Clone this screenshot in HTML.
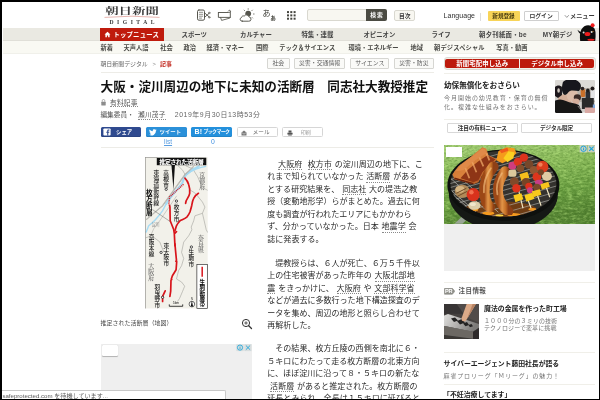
<!DOCTYPE html>
<html lang="ja">
<head>
<meta charset="utf-8">
<title>大阪・淀川周辺の地下に未知の活断層　同志社大教授推定：朝日新聞デジタル</title>
<style>
html,body{margin:0;padding:0;}
body{width:600px;height:400px;position:relative;overflow:hidden;background:#fff;will-change:transform;
 font-family:"Liberation Sans","Noto Sans CJK JP",sans-serif;color:#333;}
.a{position:absolute;white-space:nowrap;margin:0;padding:0;box-sizing:border-box;}
.b{font-weight:bold;}
.c{text-align:center;}
/* nav */
.n1{top:28px;height:13px;line-height:13.5px;font-size:6.4px;font-weight:bold;color:#444;}
.n2{top:41px;height:12.4px;line-height:13.4px;font-size:6.25px;font-weight:bold;color:#4a4a46;}
.tag{top:58.4px;height:10.4px;line-height:9.6px;font-size:5.9px;color:#585858;border:0.5px solid #d6d6d2;border-radius:1px;text-align:center;background:#fafaf8;}
.hl{left:0;height:0.9px;background:#edece7;}
.hr2{height:1px;background:#f0efe9;}
.body{left:267.3px;font-size:8.04px;line-height:12.5px;color:#2b2b2b;}
.kw{margin:0 2.8px;border-bottom:0.6px dotted #8a8a8a;padding-bottom:0.3px;}
.sb{top:127.1px;height:10.3px;box-shadow:inset 0 -0.6px 0 rgba(0,0,0,.18);border-radius:1.5px;color:#fff;font-size:5.4px;font-weight:bold;line-height:10px;}
.wb{top:127.1px;height:10.3px;border-radius:1.5px;border:0.5px solid #d6d6d6;background:#fff;font-size:5.6px;line-height:9.4px;color:#666;}
.rt{font-size:7.5px;font-weight:bold;color:#222;line-height:10px;}
.rd{font-size:6px;color:#747474;line-height:8px;letter-spacing:0.97px;}
</style>
</head>
<body>

<!-- ===== header ===== -->
<div class="a" id="logo" style="left:104px;top:3px;width:56px;height:22px;">
 <div class="a" style="left:8px;top:0.6px;width:40px;text-align:center;font-family:'Liberation Serif','Noto Serif CJK SC',serif;font-weight:bold;font-size:9.6px;line-height:14px;color:#3c3c3c;transform:scaleX(1.4);transform-origin:50% 50%;">朝日新聞</div>
 <svg class="a" style="left:0;top:11.4px;" width="56" height="5" viewBox="0 0 56 5"><path d="M0.5 3.4 Q28 1 55.5 3.4" fill="none" stroke="#dc938c" stroke-width="0.7"/></svg>
 <div class="a" style="left:0;top:14.9px;width:56px;text-align:center;font-family:'Liberation Serif',serif;font-weight:bold;font-size:5.6px;line-height:8px;letter-spacing:3.5px;color:#3a3a3a;padding-left:3.5px;">DIGITAL</div>
</div>

<!-- header icons -->
<svg class="a" style="left:195px;top:6px;" width="104" height="18" viewBox="195 6 104 18" fill="none" stroke="#55554d" stroke-width="1" stroke-linecap="round" stroke-linejoin="round">
 <!-- scrap -->
 <rect x="197.500" y="10" width="7" height="10.200" rx="1.400"/>
 <path d="M199.300 12.300h3.400M199.300 14.300h3.400M199.300 16.200h3.400M199.300 18.100h2.200" stroke-width="0.650"/>
 <path d="M205.200 13.400l3.600 3.200M205.200 16.800l3.600-3.200" stroke-width="0.900"/>
 <circle cx="209.200" cy="12.900" r="0.800" stroke-width="0.650"/><circle cx="209.200" cy="17.300" r="0.800" stroke-width="0.650"/>
 <!-- speech -->
 <path d="M218.400 12.500h9.800c1.600 0 2.400-.400 2.300-1.300-.1-1.100-1.700-1.300-2.200-.2M230.300 11.800v5.600h-11.900v-4.900" stroke-width="0.950"/>
 <path d="M220.600 17.600l1 2.800 8.200-2.300.5-.7" stroke-width="0.850"/>
 <!-- weather -->
 <circle cx="248.200" cy="13.600" r="2.900" fill="#55554d" stroke="none"/>
 <path d="M248.200 8.700v.6M244.100 10.100l.5.500M252.400 10.100l-.5.500M253.500 14h.6M252.200 17.600l.4.400" stroke-width="0.800"/>
 <path d="M242.300 21.200h6.400a2.100 2.100 0 0 0 .4-4.200 2.700 2.700 0 0 0-4.900-.9 1.900 1.900 0 0 0-2.700 1.400 1.900 1.900 0 0 0 .8 3.700z" fill="#fff" stroke-width="0.950"/>
 <!-- grid -->
 <g fill="#44443e" stroke="none">
 <rect x="287.0" y="11.1" width="2" height="2"/><rect x="290.3" y="11.1" width="2" height="2"/><rect x="293.6" y="11.1" width="2" height="2"/>
 <rect x="287.0" y="14.4" width="2" height="2"/><rect x="290.3" y="14.4" width="2" height="2"/><rect x="293.6" y="14.4" width="2" height="2"/>
 <rect x="287.0" y="17.7" width="2" height="2"/><rect x="290.3" y="17.7" width="2" height="2"/><rect x="293.6" y="17.7" width="2" height="2"/>
 </g>
</svg>
<div class="a" style="left:262.6px;top:9.0px;font-size:8px;line-height:10px;color:#3c3c36;">あ</div>
<div class="a b" style="left:269.8px;top:13.2px;font-size:6.6px;line-height:10px;color:#4a4a43;">ぁ</div>

<!-- search -->
<div class="a" style="left:306.5px;top:9.2px;width:60px;height:12px;background:#f8f7f1;border:0.5px solid #d9d8d0;border-radius:2px 0 0 2px;"></div>
<div class="a b c" style="left:366px;top:9.2px;width:21px;height:12px;background:#4b4b43;border-radius:0 2px 2px 0;color:#fff;font-size:5.8px;line-height:12px;letter-spacing:0.8px;padding-left:0.8px;">検索</div>
<div class="a b c" style="left:394.3px;top:9.8px;width:21px;height:10.8px;background:#f8f7f1;border:0.5px solid #d9d8d0;border-radius:2px;color:#3a3a3a;font-size:5.8px;line-height:10px;">目次</div>

<div class="a" style="left:443.5px;top:11.4px;font-size:7px;line-height:10px;color:#2e2e2e;letter-spacing:0.05px;">Language</div>
<div class="a" style="left:480.4px;top:12.5px;width:0.6px;height:8px;background:#ddd;"></div>
<div class="a b c" style="left:487.5px;top:11.2px;width:32px;height:10.2px;background:#f8d458;border-radius:1px;color:#4a3d10;font-size:5.6px;line-height:10.2px;">新規登録</div>
<div class="a b c" style="left:523.5px;top:11.2px;width:35.2px;height:10.2px;background:#fff;border:0.5px solid #cfcfcf;border-radius:1px;color:#3a3a3a;font-size:5.8px;line-height:9.4px;">ログイン</div>
<svg class="a" style="left:564px;top:14px;" width="6" height="5" viewBox="0 0 6 5"><path d="M0.8 1.2l2 2.2 2-2.2" fill="none" stroke="#555" stroke-width="0.6"/></svg>
<div class="a b" style="left:570px;top:11.2px;font-size:6.2px;line-height:10.2px;color:#3a3a3a;">メニュー</div>

<!-- nav bars -->
<div class="a" style="left:3px;top:28px;width:596px;height:12.9px;background:#eae9e2;border-bottom:0.6px solid #e0dfd8;"></div>
<div class="a" style="left:3px;top:40.9px;width:596px;height:13.2px;background:#f9f9f3;border-bottom:1px solid #f0f0ea;"></div>
<div class="a" style="left:100px;top:28px;width:63.6px;height:12.9px;background:#bf1b0d;"></div>
<svg class="a" style="left:104.2px;top:31.4px;" width="7" height="7" viewBox="0 0 8 8"><path d="M4 0.8L0.6 4h1v3h1.700V5h1.400v2h1.700V4h1z" fill="#fff"/></svg>
<div class="a n1" style="left:113.5px;color:#fff;letter-spacing:0.15px;">トップニュース</div>
<div class="a n1" style="left:181.5px;">スポーツ</div>
<div class="a n1" style="left:240px;">カルチャー</div>
<div class="a n1" style="left:301.4px;">特集・連載</div>
<div class="a n1" style="left:363.4px;">オピニオン</div>
<div class="a n1" style="left:431.6px;">ライフ</div>
<div class="a n1" style="left:479px;letter-spacing:0.25px;">朝夕刊紙面・be</div>
<div class="a n1" style="left:542.8px;letter-spacing:0.2px;">MY朝デジ</div>

<div class="a n2" style="left:100.4px;">新着</div>
<div class="a n2" style="left:123.6px;">天声人語</div>
<div class="a n2" style="left:160.2px;">社会</div>
<div class="a n2" style="left:183.4px;">政治</div>
<div class="a n2" style="left:206.4px;">経済・マネー</div>
<div class="a n2" style="left:256px;">国際</div>
<div class="a n2" style="left:279.2px;">テック＆サイエンス</div>
<div class="a n2" style="left:348.6px;">環境・エネルギー</div>
<div class="a n2" style="left:410.6px;">地域</div>
<div class="a n2" style="left:434px;letter-spacing:0.15px;">朝デジスペシャル</div>
<div class="a n2" style="left:496.2px;">写真・動画</div>

<!-- mascot -->
<svg class="a" style="left:576px;top:21px;" width="22" height="21" viewBox="576 21 22 21">
 <path d="M580.200 41c-.6-4.500-.4-8.500 1.200-11.500 1.500-2.700 4-4.200 6.800-4.200 4.200 0 7 3 7.300 7.200 .2 3.200 0 6-.3 8.500z" fill="#0e0e0e"/>
 <path d="M577.400 29.800l1.600 3 2.200 1.800.6-2.200-2-1z" fill="#0e0e0e"/>
 <circle cx="592.600" cy="25.200" r="2" fill="#ee1c1c"/>
 <ellipse cx="587.500" cy="34" rx="2.900" ry="2" fill="#ee1c1c"/>
 <circle cx="583.600" cy="32.400" r="1" fill="#ddd"/><circle cx="591.600" cy="32" r="1" fill="#ddd"/>
 <circle cx="593" cy="31.400" r="0.500" fill="#f0a020"/>
 <ellipse cx="591" cy="39.700" rx="3.600" ry="1" fill="#ee1c1c"/>
</svg>

<!-- breadcrumb + tags -->
<div class="a" style="left:100.4px;top:59.5px;font-size:5.95px;line-height:9px;color:#666;">朝日新聞デジタル</div>
<div class="a" style="left:152.6px;top:59.5px;font-size:5.8px;line-height:9px;color:#888;">&gt;</div>
<div class="a b" style="left:160px;top:59.5px;font-size:5.95px;line-height:9px;color:#c0241a;">記事</div>

<div class="a tag" style="left:266.6px;width:23.4px;">社会</div>
<div class="a tag" style="left:294px;width:51.2px;">災害・交通情報</div>
<div class="a tag" style="left:350.4px;width:38.8px;">サイエンス</div>
<div class="a tag" style="left:394px;width:39.8px;">災害・防災</div>

<div class="a hl" style="left:100.5px;top:72px;width:333px;"></div>

<!-- headline -->
<h1 class="a b" style="left:100.6px;top:78.1px;font-size:12.6px;line-height:18px;color:#111;letter-spacing:0;">大阪・淀川周辺の地下に未知の活断層　同志社大教授推定</h1>

<!-- paid -->
<svg class="a" style="left:101px;top:99px;" width="5" height="7" viewBox="0 0 5 7"><rect x="0.3" y="2.800" width="4.400" height="3.600" rx="0.500" fill="#8c8c8c"/><path d="M1.200 2.800v-1a1.300 1.300 0 0 1 2.600 0v1" fill="none" stroke="#8c8c8c" stroke-width="0.700"/></svg>
<div class="a" style="left:110px;top:98.5px;font-size:6.7px;line-height:7.9px;color:#555;letter-spacing:0.25px;border-bottom:0.6px dotted #888;">有料記事</div>

<!-- byline -->
<div class="a" style="left:100.4px;top:110px;font-size:6.7px;line-height:10px;color:#555;">編集委員・</div>
<div class="a" style="left:138px;top:110.9px;font-size:6.7px;line-height:8px;color:#555;letter-spacing:0.2px;border-bottom:0.6px dotted #888;">瀬川茂子</div>
<div class="a" style="left:174.8px;top:110px;font-size:6.9px;line-height:10px;color:#666;letter-spacing:0.56px;">2019年9月30日13時53分</div>

<!-- share -->
<div class="a sb" style="left:100.5px;width:40.7px;background:#2f4a8f;"><svg class="a" style="left:2px;top:1.2px;" width="8" height="8" viewBox="0 0 8 8"><rect x="0.4" y="0.4" width="7.200" height="7.200" rx="0.800" fill="#fff"/><path d="M5.300 7.600V4.800h.9l.15-1.100H5.300v-.7c0-.3.100-.5.500-.5h.6v-1a7 7 0 0 0-.8 0c-.9 0-1.400.5-1.400 1.400v.8h-.9v1.100h.9v2.800z" fill="#2f4a8f"/></svg><span class="a" style="left:15.500px;top:0;">シェア</span></div>
<div class="a sb" style="left:146px;width:40.7px;background:#2b90d9;"><svg class="a" style="left:3px;top:1.600px;" width="8" height="7" viewBox="0 0 8 7"><path d="M7.700 1a3 3 0 0 1-.9.250 1.600 1.600 0 0 0 .7-.9 3 3 0 0 1-1 .4 1.560 1.560 0 0 0-2.700 1.400A4.400 4.400 0 0 1 .6.550a1.560 1.560 0 0 0 .5 2.100 1.500 1.500 0 0 1-.7-.2 1.560 1.560 0 0 0 1.250 1.550 1.500 1.500 0 0 1-.7 0 1.560 1.560 0 0 0 1.450 1.100A3.100 3.100 0 0 1 .1 5.750a4.400 4.400 0 0 0 6.800-3.900A3 3 0 0 0 7.700 1z" fill="#fff"/></svg><span class="a" style="left:13.500px;top:0;">ツイート</span></div>
<div class="a sb" style="left:191.4px;width:40.9px;background:#2390dc;"><span class="a" style="left:3px;top:0;font-size:7px;letter-spacing:0.3px;">B!</span><span class="a" style="left:12px;top:0;font-size:4.9px;letter-spacing:-0.55px;">ブックマーク</span></div>
<div class="a wb" style="left:236.7px;width:41px;"><svg class="a" style="left:3px;top:1.800px;" width="6" height="6" viewBox="0 0 6 6"><path d="M.5 2.600L3 .6l2.500 2V5.400H.5z" fill="#777"/><path d="M1.100 2.800L3 4.200l1.900-1.400" fill="none" stroke="#fff" stroke-width="0.500"/></svg><span class="a" style="left:15px;top:0;">メール</span></div>
<div class="a wb" style="left:282.2px;width:41px;color:#999;"><svg class="a" style="left:3.400px;top:1.700px;" width="6" height="6" viewBox="0 0 6 6"><path d="M1.500.4h3v2h-3zM.4 2.800h5.200v1.600H.4zM1.200 4.800h3.600v.8H1.200z" fill="#555"/></svg><span class="a" style="left:17.600px;top:0;font-size:5px;">印刷</span></div>
<div class="a" style="left:164px;top:138.2px;font-size:6.6px;line-height:8px;color:#5a9de0;text-decoration:underline;text-decoration-thickness:0.4px;text-underline-offset:0.6px;">list</div>
<div class="a" style="left:211px;top:138px;font-size:6.8px;line-height:8px;color:#3f8fe0;">0</div>

<div class="a hl" style="left:100.5px;top:147px;width:333px;"></div>

<!-- MAP -->
<!--MAP-->
<svg class="a" style="left:145.3px;top:157.2px;" width="62.700" height="151.500" viewBox="145.3 157.2 62.7 151.5" font-family="Liberation Sans, Noto Sans CJK JP, sans-serif">
 <rect x="145.3" y="157.2" width="62.7" height="151.5" fill="#f2f1ea"/>
 <!-- boundaries -->
 <g fill="none" stroke="#9a9a95" stroke-width="0.550">
  <path d="M178 165.500l5 5 2.500 4.500"/>
  <path d="M186 166l7 3 5 8 3 7 4 5 3 1.500"/>
  <path d="M190 190l5 3 2.750 3 5 6.250 2.500 5-2.500 6.250-7.500 2.500-1.250 5-2.500 6.250 .7 2.750-3.200 6-5 6.300-2.100 10.200 2.100 6.200-2.100 7.200-3.100 5.100-2 8.200 5.100 3.050 3.100 4.150-2.100 5.100-3 7.100-2.100 3.100"/>
  <path d="M202.750 213.500l3.750 16.250 1.500 3"/>
  <path d="M146 238l6-2 8 6 4 10"/>
 </g>
 <!-- keihan thin -->
 <path d="M177 196l-17 25-6 8-2.500 5.750" fill="none" stroke="#8f8f8a" stroke-width="0.400"/>
 <!-- river -->
 <path d="M206.500 166.600c-7 1-14 4-20.500 8.150" fill="none" stroke="#a6dbf4" stroke-width="1.300"/>
 <path d="M199 166.600c-5 2-9 5-12.500 8.150-2.500 3-2.800 5.500-3.750 8.150-2 3.500-5 6.500-7.500 9.350-3.500 4-6 7.500-8.750 11.750" fill="none" stroke="#a6dbf4" stroke-width="2.200" stroke-linecap="round" stroke-linejoin="round"/>
 <path d="M166.500 204l-3.750 7c-2 3-4.500 6-6.850 8.750-2.200 2.400-4.400 4.400-6.900 6.250l-2.500 6.250" fill="none" stroke="#a6dbf4" stroke-width="1.400" stroke-linecap="round" stroke-linejoin="round"/>
 <!-- rail -->
 <path d="M194 166.600l-8.750 8.150L162.750 206 146.500 219.750" fill="none" stroke="#9d9d98" stroke-width="1.100" stroke-linejoin="round"/>
 <path d="M194 166.600l-8.750 8.150L162.750 206 146.500 219.750" fill="none" stroke="#f2f1ea" stroke-width="0.350" stroke-linejoin="round"/>
 <!-- red faults -->
 <g fill="none" stroke="#d8141b" stroke-width="1.700" stroke-linecap="round" stroke-linejoin="round">
  <path d="M183.750 184.500L169.800 197.250 169.200 204.500" stroke-dasharray="0.95 0.85" stroke-width="1.45" stroke-linecap="butt"/>
  <path d="M169.800 205.500l.45 1.750.25 13.750 3.500 8.750.6 3.750.65 12.500"/>
  <path d="M185.250 178.250c2 2 3 4 3.750 6.500 1 3 1.200 6 1 8.750-.5 3-2.500 5-3.500 7.500l-.6 2.500"/>
  <path d="M198.750 193.500c-2.500 1.500-3.800 3-4.750 5-1.200 2.200-1.500 4.500-1.900 6.900-.5 2.300-1.200 4.600-1.850 6.850-.8 2-1.800 3.600-3.150 5-2 1.800-4.500 2.500-6.850 3.750-1.600 1.500-2.600 3.200-3.500 5l-1.500 5"/>
  <path d="M176.800 231.800l-1.500 1.500"/>
  <path d="M175.250 244l.55 6.500 1 10.200-.6.800.8.300-.6 8.200-3.700 6-1 3 .3.800-.7.600-.3 11-.8 5.200"/>
  <path d="M165.500 291l-2.600 5.600v5.100"/>
 </g>
 <!-- title -->
 <rect x="157.100" y="157.900" width="49.500" height="7.500" fill="#111"/>
 <path d="M171.750 165.300h3.500l-1.500 24.500z" fill="#111"/>
 <text x="181.850" y="163.800" font-size="5.700" font-weight="bold" fill="#fff" stroke="#fff" stroke-width="0.120" text-anchor="middle" letter-spacing="-0.200">推定された活断層</text>
 <!-- leader -->
 <path d="M152.750 209.750l17.500 11.850" stroke="#444" stroke-width="0.400" fill="none"/>
 <!-- markers -->
 <g fill="#fff" stroke="#111" stroke-width="0.750"><circle cx="166.500" cy="189.500" r="1.150"/><circle cx="176.750" cy="201.250" r="1.150"/><circle cx="161.400" cy="252.600" r="1.150"/><circle cx="191.700" cy="247.200" r="1.150"/><circle cx="162.900" cy="297.500" r="1.150"/></g>
 <text font-size="5.600" fill="#111" stroke="#111" stroke-width="0.070" text-anchor="middle"><tspan x="166.25" y="174.9">高</tspan><tspan x="166.25" y="181.0">槻</tspan><tspan x="166.25" y="187.0">市</tspan></text>
 <text font-size="5.600" fill="#111" stroke="#111" stroke-width="0.070" text-anchor="middle"><tspan x="156.6" y="174.9">東</tspan><tspan x="156.6" y="181.1">海</tspan><tspan x="156.6" y="187.2">道</tspan><tspan x="156.6" y="193.3">新</tspan><tspan x="156.6" y="199.4">幹</tspan><tspan x="156.6" y="205.5">線</tspan></text>
 <text font-size="6.600" font-weight="bold" fill="#0c0c0c" text-anchor="middle"><tspan x="149.7" y="194.7">枚</tspan><tspan x="149.7" y="201.5">方</tspan><tspan x="149.7" y="208.4">断</tspan><tspan x="149.7" y="215.2">層</tspan></text>
 <text font-size="5.600" fill="#111" stroke="#111" stroke-width="0.070" text-anchor="middle"><tspan x="176.75" y="209.3">枚</tspan><tspan x="176.75" y="215.2">方</tspan><tspan x="176.75" y="221.2">市</tspan></text>
 <text font-size="6" fill="#5e5e5e" stroke="#5e5e5e" stroke-width="0.060" text-anchor="middle" font-family="Liberation Serif, Noto Serif CJK SC, serif"><tspan x="202.5" y="177.0">京</tspan><tspan x="202.5" y="183.2">都</tspan><tspan x="202.5" y="189.5">府</tspan></text>
 <text x="155.900" y="226.600" font-size="4.200" fill="#777" text-anchor="middle" font-family="Liberation Serif, Noto Serif CJK SC, serif">淀川</text>
 <text font-size="5.600" fill="#111" stroke="#111" stroke-width="0.070" text-anchor="middle"><tspan x="151.9" y="238.9">京</tspan><tspan x="151.9" y="244.6">阪</tspan><tspan x="151.9" y="250.2">本</tspan><tspan x="151.9" y="255.9">線</tspan></text>
 <text font-size="5.600" fill="#111" stroke="#111" stroke-width="0.070" text-anchor="middle"><tspan x="166.5" y="247.9">東</tspan><tspan x="166.5" y="253.8">大</tspan><tspan x="166.5" y="259.6">阪</tspan><tspan x="166.5" y="265.5">市</tspan></text>
 <text font-size="6" fill="#5e5e5e" stroke="#5e5e5e" stroke-width="0.060" text-anchor="middle" font-family="Liberation Serif, Noto Serif CJK SC, serif"><tspan x="151.5" y="268.6">大</tspan><tspan x="151.5" y="274.6">阪</tspan><tspan x="151.5" y="280.5">府</tspan></text>
 <text font-size="5.600" fill="#111" stroke="#111" stroke-width="0.070" text-anchor="middle"><tspan x="191.7" y="254.6">生</tspan><tspan x="191.7" y="260.3">駒</tspan><tspan x="191.7" y="266.0">市</tspan></text>
 <text font-size="6" fill="#5e5e5e" stroke="#5e5e5e" stroke-width="0.060" text-anchor="middle" font-family="Liberation Serif, Noto Serif CJK SC, serif"><tspan x="201.4" y="239.8">奈</tspan><tspan x="201.4" y="245.8">良</tspan><tspan x="201.4" y="251.8">県</tspan></text>
 <text font-size="5.600" fill="#111" stroke="#111" stroke-width="0.070" text-anchor="middle"><tspan x="157.5" y="289.7">羽</tspan><tspan x="157.5" y="295.5">曳</tspan><tspan x="157.5" y="301.3">野</tspan><tspan x="157.5" y="307.1">市</tspan></text>
 <rect x="197.200" y="264.600" width="10.400" height="43.900" fill="#fff" stroke="#111" stroke-width="0.600"/>
 <path d="M202.500 267v9.900" stroke="#d8141b" stroke-width="1.500"/>
 <text font-size="5.600" font-weight="bold" fill="#0c0c0c" text-anchor="middle"><tspan x="202.5" y="283.8">生</tspan><tspan x="202.5" y="289.3">駒</tspan><tspan x="202.5" y="294.8">断</tspan><tspan x="202.5" y="300.3">層</tspan><tspan x="202.5" y="305.8">帯</tspan></text>
 <path d="M169.600 304.600v1.900h13.400v-1.900" fill="none" stroke="#111" stroke-width="0.800"/>
 <text x="176.300" y="304.700" font-size="3.400" fill="#111" text-anchor="middle">5km</text>
 <circle cx="192.200" cy="304.300" r="2.800" fill="#fff" stroke="#111" stroke-width="0.600"/>
 <path d="M192.200 300.600l1.200 6h-2.400z" fill="#111"/>
 <text x="192.200" y="300.200" font-size="2.600" fill="#111" text-anchor="middle">N</text>
 <path d="M145.550 308.700V157.450h12" fill="none" stroke="#444" stroke-width="0.500"/>
</svg>
<!--/MAP-->

<!-- caption -->
<div class="a" style="left:100.4px;top:318.8px;font-size:6px;line-height:9px;color:#4c4c4c;">推定された活断層（地図）</div>
<svg class="a" style="left:241px;top:318px;" width="12" height="12" viewBox="0 0 12 12"><circle cx="5" cy="5" r="3.600" fill="none" stroke="#333" stroke-width="1"/><path d="M7.700 7.700l2.800 2.800" stroke="#333" stroke-width="1.300" stroke-linecap="round"/><path d="M3.300 5h3.400M5 3.300v3.400" stroke="#333" stroke-width="0.800"/></svg>

<!-- left ad -->
<div class="a" style="left:100.5px;top:343.5px;width:151.3px;height:57px;background:#efefef;"></div>
<div class="a" style="left:102px;top:345.2px;width:16.4px;height:11px;background:#fff;border-radius:1.200px;box-shadow:0 0.300px 0.800px rgba(0,0,0,.25);"></div>
<svg class="a" style="left:236px;top:344px;" width="16" height="8" viewBox="236 344 16 8"><rect x="236.300" y="344.200" width="7.400" height="6.900" fill="#d9dede"/><rect x="244.300" y="344.200" width="7.300" height="6.900" fill="#d9dede"/><circle cx="240" cy="347.600" r="2.600" fill="none" stroke="#1fa7dc" stroke-width="0.850"/><path d="M240 347.100v1.900M240 346v.450" stroke="#1fa7dc" stroke-width="0.850"/><path d="M245.900 345.500l4.200 4.200M250.100 345.500l-4.200 4.200" stroke="#1fa7dc" stroke-width="0.900"/></svg>

<!-- ARTICLE -->
<!--ARTICLE-->
<p class="a body" style="top:158.75px;padding-left:8px;"><span class="kw">大阪府</span><span class="kw">枚方市</span>の淀川周辺の地下に、こ</p>
<p class="a body" style="top:171.25px;padding-left:0px;">れまで知られていなかった<span class="kw">活断層</span>がある</p>
<p class="a body" style="top:183.75px;padding-left:0px;">とする研究結果を、<span class="kw">同志社</span>大の堤浩之教</p>
<p class="a body" style="top:196.25px;padding-left:0px;">授（変動地形学）らがまとめた。過去に何</p>
<p class="a body" style="top:208.75px;padding-left:0px;">度も調査が行われたエリアにもかかわら</p>
<p class="a body" style="top:221.25px;padding-left:0px;">ず、分かっていなかった。日本<span class="kw">地震学</span>会</p>
<p class="a body" style="top:233.75px;padding-left:0px;">誌に発表する。</p>
<p class="a body" style="top:257.75px;padding-left:8px;">堤教授らは、６人が死亡、６万５千件以</p>
<p class="a body" style="top:270.25px;padding-left:0px;">上の住宅被害があった昨年の<span class="kw">大阪北部地</span></p>
<p class="a body" style="top:282.75px;padding-left:0px;"><span class="kw" style="margin-left:0">震</span>をきっかけに、<span class="kw">大阪府</span>や<span class="kw">文部科学省</span></p>
<p class="a body" style="top:295.25px;padding-left:0px;">などが過去に多数行った地下構造探査のデ</p>
<p class="a body" style="top:307.75px;padding-left:0px;">ータを集め、周辺の地形と照らし合わせて</p>
<p class="a body" style="top:320.25px;padding-left:0px;">再解析した。</p>
<p class="a body" style="top:343.05px;padding-left:8px;">その結果、枚方丘陵の西側を南北に６・</p>
<p class="a body" style="top:355.55px;padding-left:0px;">５キロにわたって走る枚方断層の北東方向</p>
<p class="a body" style="top:368.05px;padding-left:0px;">に、ほぼ淀川に沿って８・５キロの新たな</p>
<p class="a body" style="top:380.55px;padding-left:0px;"><span class="kw">活断層</span>があると推定された。枚方断層の</p>
<p class="a body" style="top:393.05px;padding-left:0px;">延長とみられ、全長は１５キロに延びると</p>
<!--/ARTICLE-->

<!-- RIGHT -->
<!--RIGHT-->
<!-- subscribe buttons -->
<div class="a" style="left:443.6px;top:57.2px;width:152.6px;height:12.8px;background:#f1f0ea;border:0.5px solid #dcdbd3;border-radius:3px;"></div>
<div class="a b c" style="left:445.4px;top:59px;width:73.6px;height:9.2px;background:#bd1a0c;border-radius:2px 0 0 2px;color:#fff;font-size:6.4px;line-height:9.2px;letter-spacing:0.1px;">新聞宅配申し込み</div>
<div class="a b c" style="left:520.2px;top:59px;width:73.8px;height:9.2px;background:#bd1a0c;border-radius:0 2px 2px 0;color:#fff;font-size:6.4px;line-height:9.2px;letter-spacing:0.1px;">デジタル申し込み</div>

<div class="a hl hr2" style="left:444px;top:73px;width:151px;"></div>
<div class="a rt" style="left:444px;top:81.4px;font-size:7.6px;">幼保無償化をおさらい</div>
<div class="a rd" style="left:444px;top:94.4px;">今月開始の幼児教育・保育の無償</div>
<div class="a rd" style="left:444px;top:102.6px;">化。複雑な仕組みをおさらい。</div>
<!-- photo -->
<svg class="a" style="left:555px;top:80px;border-radius:1.500px;" width="39.800" height="32.500" viewBox="0 0 40 32.500" preserveAspectRatio="none">
 <defs><filter id="pb" x="-5%" y="-5%" width="110%" height="110%"><feGaussianBlur stdDeviation="0.550"/></filter></defs>
 <rect width="40" height="32.500" fill="#cfccc8"/>
 <g filter="url(#pb)">
 <rect x="-2" y="-2" width="44" height="12" fill="#dcdad6"/>
 <rect x="22" y="8" width="20" height="14" fill="#b9b2aa"/>
 <rect x="25.800" y="9" width="4.600" height="8" rx="1.500" fill="#c9702c"/>
 <ellipse cx="27.600" cy="8.600" rx="1.900" ry="1.800" fill="#2a2220"/>
 <rect x="30.800" y="11" width="4.600" height="10" rx="1.500" fill="#2b2d35"/>
 <ellipse cx="33" cy="10.400" rx="1.800" ry="1.900" fill="#1c1a1c"/>
 <rect x="35.800" y="9.500" width="5" height="11" rx="1.500" fill="#e4e4e6"/>
 <ellipse cx="37.600" cy="8.600" rx="1.900" ry="2" fill="#231d1c"/>
 <rect x="27" y="18" width="12" height="11" fill="#2a2a2c"/>
 <rect x="30" y="27.500" width="12" height="6" fill="#d9a9a4"/>
 <rect x="38" y="24.500" width="3" height="3.500" fill="#7fa6d8"/>
 <path d="M4 15c3-1 6-1 9 0l4 8-8 3-7-3z" fill="#d2ad98"/>
 <ellipse cx="17.500" cy="15.500" rx="5.800" ry="6" fill="#dcbba8"/>
 <ellipse cx="22.500" cy="17.500" rx="3.600" ry="3.200" fill="#3a2b28"/>
 <ellipse cx="21" cy="21.500" rx="3.600" ry="3" fill="#d4ae9c"/>
 <path d="M8 2c4-4 13-4 17 1 2 3 1 6-1 8-3 0-6-1-9 0-2 1-3 4-5 4-3-1-4-6-2-13z" fill="#17171a"/>
 <path d="M0 7c2-2 5-2 7 0v8l-4 3-3-2z" fill="#1a191b"/>
 <ellipse cx="3.600" cy="10.500" rx="1.300" ry="2.200" fill="#cfc6c0"/>
 <path d="M-1 21c4-2 8-2 12 0 4 2 9 2 13 4l4 9H-1z" fill="#131316"/>
 <path d="M23 26l4 5" stroke="#b9b4b0" stroke-width="0.700"/>
 </g>
</svg>
<div class="a hl hr2" style="left:444px;top:118.6px;width:151px;"></div>
<div class="a b c" style="left:446.7px;top:122.8px;width:71.2px;height:10.6px;border:0.5px solid #d8d8d8;border-radius:1px;background:#fff;font-size:5.7px;line-height:9.8px;color:#333;letter-spacing:-0.2px;">注目の有料ニュース</div>
<div class="a b c" style="left:521.3px;top:122.8px;width:70.4px;height:10.6px;border:0.5px solid #d8d8d8;border-radius:1px;background:#fff;font-size:5.7px;line-height:9.8px;color:#333;letter-spacing:-0.2px;">デジタル限定</div>

<!-- BBQ ad -->
<div class="a" style="left:443.6px;top:144.7px;width:151.4px;height:126px;background:#efefef;"></div>
<!--BBQ-->
<svg class="a" style="left:443.6px;top:144.7px;" width="151.4" height="79.2" viewBox="443.6 144.7 151.4 79.2" preserveAspectRatio="none">
 <defs>
  <linearGradient id="gr" x1="0" y1="0" x2="0.25" y2="1">
   <stop offset="0" stop-color="#a9d07c"/><stop offset="0.35" stop-color="#8ebd5e"/><stop offset="0.7" stop-color="#6b9f43"/><stop offset="1" stop-color="#548233"/>
  </linearGradient>
  <filter id="nz" x="0" y="0" width="100%" height="100%" color-interpolation-filters="sRGB"><feTurbulence type="fractalNoise" baseFrequency="0.3 0.55" numOctaves="3" seed="4"/><feColorMatrix type="matrix" values="0 0 0 0 0.2  0 0 0 0 0.4  0 0 0 0 0.08  2.4 0 0 0 -0.95"/></filter>
  <filter id="nl" x="0" y="0" width="100%" height="100%" color-interpolation-filters="sRGB"><feTurbulence type="fractalNoise" baseFrequency="0.18 0.4" numOctaves="3" seed="11"/><feColorMatrix type="matrix" values="0 0 0 0 0.72  0 0 0 0 0.9  0 0 0 0 0.5  0 2.6 0 0 -1.05"/></filter>
  <filter id="fb" x="-5%" y="-5%" width="110%" height="110%"><feGaussianBlur stdDeviation="0.45"/></filter>
  <clipPath id="gc"><ellipse cx="503" cy="183.500" rx="53" ry="33"/></clipPath>
  <linearGradient id="sg" x1="0" y1="0" x2="1" y2="0"><stop offset="0" stop-color="#9c4716"/><stop offset="0.4" stop-color="#e29548"/><stop offset="0.75" stop-color="#c56f26"/><stop offset="1" stop-color="#8e3f14"/></linearGradient>
  <linearGradient id="rg" x1="0" y1="0" x2="1" y2="1"><stop offset="0" stop-color="#c96a2c"/><stop offset="0.5" stop-color="#d9823c"/><stop offset="1" stop-color="#9a3f18"/></linearGradient>
 </defs>
 <rect x="443.6" y="144.7" width="151.4" height="79.2" fill="url(#gr)"/>
 <rect x="443.6" y="144.700" width="151.400" height="79.200" filter="url(#nl)" opacity="0.5"/>
 <rect x="443.6" y="144.700" width="151.400" height="79.200" filter="url(#nz)" opacity="0.36"/>
 <!-- leg -->
 <path d="M463 215l-9 8.500h8l6-5.500z" fill="#9aa596"/>
 <!-- bowl -->
 <ellipse cx="503" cy="194" rx="54.500" ry="36" fill="#151815"/>
 <!-- rim -->
 <ellipse cx="503" cy="185" rx="56" ry="35.800" fill="#0e100e"/>
 <ellipse cx="503" cy="183.500" rx="53" ry="33" fill="#34322e"/>
 <g clip-path="url(#gc)">
  <ellipse cx="500" cy="209" rx="36" ry="8" fill="#7a3f10" opacity="0.850"/>
  <g stroke="#b7b8b2" stroke-width="0.750" opacity="0.800">
   <path d="M440 186l125-35M440 190l125-35M440 194l125-35M442 198l125-35M444 202l125-35M446 206l125-35M450 210l120-33.600M455 214l115-32.200M462 218l110-30.800M470 222l100-28M480 225l90-25.200M440 182l120-33.600M440 178l110-30.800M440 174l100-28M440 170l80-22.400"/>
  </g>
  <g stroke="#c4c5bf" stroke-width="0.800" opacity="0.800"><path d="M448 176l40 36M450 168l48 44M446 186l30 26M452 194l14 12"/></g>
  <g fill="#f59a1e"><ellipse cx="488" cy="213" rx="6" ry="1.800"/><ellipse cx="513" cy="214.300" rx="7" ry="1.500"/><ellipse cx="475" cy="209.500" rx="3" ry="1.300"/><ellipse cx="532" cy="209" rx="4" ry="1.400"/><ellipse cx="499" cy="215.300" rx="4" ry="1.100" fill="#ffd640"/></g>
 </g>
 <g filter="url(#fb)">
 <!-- ribs -->
 <path d="M452 174l6-8 13-10 11-9 4 1.400 2 6.600 9 4-6 6-8 8-5 9-5 2-19-5z" fill="url(#rg)"/>
 <path d="M455 171l5-6 12-9 10-8 3 1 1 4-11 7-12 10z" fill="#e08a48"/>
 <path d="M460 178l8-9 10-8 9-6 8 4-5 5-8 8-4 8-5 2z" fill="#8e3616"/>
 <path d="M465 168l4 10M472 162l4 10M479 157l4 9M486 153l3 7" stroke="#f0a868" stroke-width="1.700" opacity="0.750"/>
 <path d="M454 178l19 5.500" stroke="#6a220c" stroke-width="1.600"/>
 <!-- chicken -->
 <ellipse cx="462" cy="191" rx="7.500" ry="6.500" fill="#b08a58"/>
 <ellipse cx="459.500" cy="189" rx="4.500" ry="3.400" fill="#d6b684"/>
 <path d="M456 193l10-5M457 196l10-5" stroke="#6e4a26" stroke-width="1"/>
 <!-- tomato -->
 <circle cx="472.800" cy="194.300" r="6.600" fill="#d9301a"/>
 <circle cx="471" cy="192" r="2.300" fill="#f27050"/>
 <!-- mushroom -->
 <ellipse cx="474" cy="205.200" rx="6.200" ry="4.300" fill="#dccdaa"/>
 <ellipse cx="472.500" cy="204" rx="3" ry="1.800" fill="#f0e6cc"/>
 <!-- sausages -->
 <path d="M493 166.500c-7 8-9.500 17-9 26 .4 6.500 2.500 11.500 5.500 14.500" fill="none" stroke="url(#sg)" stroke-width="10.500" stroke-linecap="round"/>
 <path d="M504.500 171c-6 8-8 16-6.500 24 1.200 6.500 5 12 10 16" fill="none" stroke="url(#sg)" stroke-width="10" stroke-linecap="round"/>
 <path d="M490.500 168c-5.500 8-7.500 16-7 24M501.500 173c-4.500 7-6 14-4.500 21" fill="none" stroke="#f6c080" stroke-width="1.800" stroke-linecap="round" opacity="0.650"/>
 <!-- peppers top -->
 <path d="M496 160l2-9 8-4 8 1 2 5-6 6-8 4z" fill="#f59a1a"/>
 <path d="M503 158l5-7 6 1-1 6-6 4z" fill="#fbd020"/>
 <path d="M499 150l8-2.500 1 3-7 2.500z" fill="#ee5a1c"/>
 <!-- sticks -->
 <g stroke="#efe4c0" stroke-width="1.200" stroke-linecap="round"><path d="M518 189l4.500 18.500M536 192l4.500 13M545.500 186l3.700 10.500M527 198l3.500 9.500"/></g>
 <!-- skewer 0 -->
 <circle cx="512" cy="165.500" r="4" fill="#cf3c7e"/>
 <rect x="508" y="169.500" width="8" height="7" rx="2" fill="#dcc89c"/>
 <circle cx="514" cy="181.500" r="4.500" fill="#80492a"/>
 <circle cx="516" cy="188" r="4.200" fill="#dc311c"/>
 <path d="M513 195l8-2 2 6-8 3z" fill="#f9cb1e"/>
 <!-- skewer 1 -->
 <circle cx="517.500" cy="161.500" r="4.200" fill="#dc341e"/>
 <circle cx="520" cy="168" r="3.800" fill="#84502c"/>
 <path d="M519 174l8-2.500 2 6-8 3z" fill="#f7bf1c"/>
 <circle cx="525.500" cy="182" r="4.200" fill="#754426"/>
 <circle cx="528.500" cy="186" r="3.600" fill="#dc321c"/>
 <circle cx="529.500" cy="190" r="3" fill="#c83e84"/>
 <path d="M524 195l8-2.500 2 6-8 3z" fill="#f9cc1e"/>
 <!-- skewer 2 -->
 <circle cx="523.500" cy="157.300" r="4.200" fill="#dc321c"/>
 <circle cx="528.500" cy="164" r="4.400" fill="#76462c"/>
 <circle cx="533.500" cy="170" r="4.200" fill="#905632"/>
 <circle cx="536.500" cy="176.500" r="4.400" fill="#dd341d"/>
 <ellipse cx="538.500" cy="182" rx="4" ry="2.600" fill="#c63e88"/>
 <circle cx="536.500" cy="187" r="3.600" fill="#7a492c"/>
 <path d="M531.500 191l8-2 1.500 5.500-8 2.500z" fill="#f8c81c"/>
 <!-- skewer 3 -->
 <circle cx="542" cy="166.500" r="6" fill="#db3c1e"/>
 <circle cx="540" cy="164.300" r="2.200" fill="#f28058"/>
 <ellipse cx="546.500" cy="176" rx="5" ry="4.600" fill="#decca4"/>
 <circle cx="540.500" cy="172" r="3" fill="#744628"/>
 <path d="M540 184l8-2.500 1.500 5-8 3z" fill="#f7c41c"/>
 </g>
</svg>
<!--/BBQ-->
<div class="a" style="left:445.6px;top:147px;width:16.2px;height:10px;background:#fff;"></div>
<svg class="a" style="left:578px;top:144.700px;" width="17" height="8" viewBox="578 144.700 17 8"><rect x="579.600" y="144.900" width="7.800" height="7.100" fill="#dcd6d6" opacity="0.800"/><rect x="587.900" y="144.900" width="7.100" height="7.100" fill="#dcd6d6" opacity="0.800"/><circle cx="583.500" cy="148.450" r="2.700" fill="none" stroke="#1aa5d8" stroke-width="1"/><path d="M583.500 147.900v2M583.500 146.800v.4" stroke="#1aa5d8" stroke-width="0.950"/><path d="M589.300 146.300l4.300 4.300M593.600 146.300l-4.300 4.300" stroke="#1aa5d8" stroke-width="1.100"/></svg>

<!-- PR -->
<div class="a hl hr2" style="left:444px;top:282px;width:151px;"></div>
<svg class="a" style="left:443.800px;top:288px;" width="11.500" height="6.600" viewBox="0 0 11.500 6.600"><path d="M0.800 0.300h7.600l2.500 3-2.500 3H0.800a.5.5 0 0 1-.5-.5V.8a.5.5 0 0 1 .5-.5z" fill="#90908a" stroke="#7c7c76" stroke-width="0.500"/><text x="1.100" y="5.300" font-family="Liberation Sans, sans-serif" font-weight="bold" font-size="5.600" fill="#fff" letter-spacing="-0.250">PR</text></svg>
<div class="a" style="left:458.6px;top:286.4px;font-size:6.5px;line-height:10px;color:#555;letter-spacing:0.4px;font-weight:bold;">注目情報</div>
<div class="a hl hr2" style="left:444px;top:298px;width:151px;"></div>
<svg class="a" style="left:443.800px;top:304.200px;" width="35" height="34.800" viewBox="0 0 35 35" preserveAspectRatio="none">
 <defs><filter id="tb" x="-5%" y="-5%" width="110%" height="110%"><feGaussianBlur stdDeviation="0.450"/></filter>
 <linearGradient id="tg" x1="0" y1="0" x2="1" y2="0.300"><stop offset="0" stop-color="#e2e2e0"/><stop offset="0.500" stop-color="#b4b2b0"/><stop offset="1" stop-color="#7c7a78"/></linearGradient></defs>
 <rect width="35" height="35" fill="#45413f"/>
 <g filter="url(#tb)">
 <rect x="-2" y="-2" width="39" height="12" fill="#393636"/>
 <path d="M12 -1h24v20l-14-6z" fill="#514c49"/>
 <path d="M-1 12l5-2 31 10v4l-6 4L-1 22z" fill="url(#tg)"/>
 <path d="M-1 22l30 6 6-4v7l-6 5H-1z" fill="#76726e"/>
 <path d="M-1 22l30 6v8H-1z" fill="#6c6864"/>
 <path d="M29 28l6-4v12h-6z" fill="#2e2c2b"/>
 <path d="M-1 31l30 4v1H-1z" fill="#3a3836"/>
 <path d="M7 14.500l4-1 3 3-4 1.500zM13 17l5-2 3 3.500-5 2zM19 19.500l4-1.500 2 3-3.500 1.500zM24.500 21l3-1 1.500 2.500-3 1z" fill="#242222"/>
 <path d="M23 -1h9.500L22 16.500c-1 1.500-3.500 1.200-4.300-.5-.5-1.200 0-2.500.5-3.500z" fill="#dcaa88"/>
 <path d="M29 -1h3.500L23 15z" fill="#b98464"/>
 </g>
</svg>
<div class="a rt" style="left:484px;top:304px;font-size:6.9px;">魔法の金属を作った町工場</div>
<div class="a rd" style="left:484px;top:317px;letter-spacing:0.1px;">１０００分の３ミリの技術</div>
<div class="a rd" style="left:484px;top:324.400px;letter-spacing:0.1px;">テクノロジーで変革に挑戦</div>
<div class="a hl hr2" style="left:444px;top:351.800px;width:151px;"></div>
<div class="a rt" style="left:443.600px;top:358.500px;font-size:6.900px;letter-spacing:-0.080px;">サイバーエージェント藤田社長が語る</div>
<div class="a rd" style="left:443.600px;top:372px;letter-spacing:0.840px;">麻雀プロリーグ「Ｍリーグ」の魅力！</div>
<div class="a hl hr2" style="left:444px;top:384.300px;width:151px;"></div>
<div class="a rt" style="left:443px;top:389.800px;font-size:6.900px;letter-spacing:0;">「不妊治療してます」</div>
<!--/RIGHT-->

<!-- status bar -->
<div class="a" style="left:0;top:389.5px;width:225.6px;height:11px;background:#fff;border-top:0.6px solid #c8c8c8;border-right:0.6px solid #c8c8c8;border-radius:0 2px 0 0;"></div>
<div class="a" style="left:2.4px;top:391px;font-size:6.1px;line-height:9px;color:#5a5a5a;">safeprotected.com を待機しています...</div>

<!-- black frame -->
<div class="a" style="left:0;top:0;width:600px;height:1.8px;background:#000;"></div>
<div class="a" style="left:0;top:0;width:2px;height:400px;background:#000;"></div>
<div class="a" style="left:598.8px;top:0;width:1.2px;height:400px;background:#000;"></div>
<div class="a" style="left:0;top:398.7px;width:600px;height:1.3px;background:#000;"></div>
</body>
</html>
